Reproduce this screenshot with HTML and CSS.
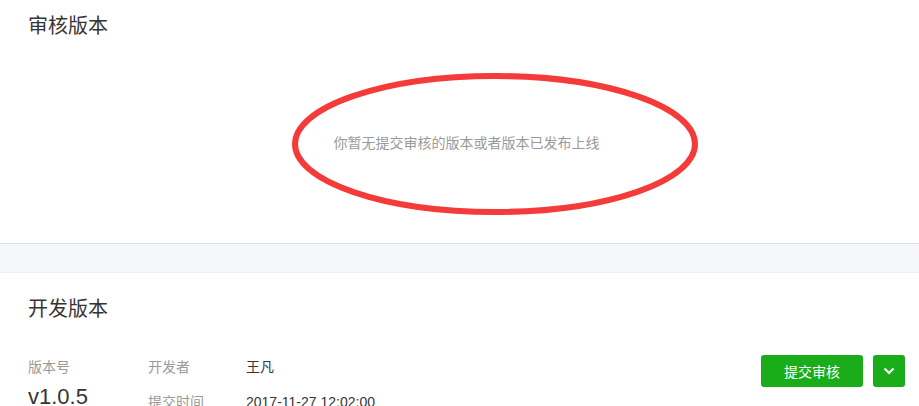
FILE: index.html
```html
<!DOCTYPE html>
<html lang="zh-CN">
<head>
    <meta charset="UTF-8">
    <meta name="viewport" content="width=device-width, initial-scale=1.0">
    <title>版本管理</title>
    <link rel="stylesheet" href="styles.css">
</head>
<body>
    <div class="section audit">
        <div class="section-title">审核版本</div>
        <div class="empty-tip">你暂无提交审核的版本或者版本已发布上线</div>
        <svg class="mark" width="406" height="142" viewBox="0 0 406 142">
            <ellipse cx="203" cy="71" rx="200" ry="68" fill="none" stroke="#f53a3a" stroke-width="6"/>
        </svg>
    </div>

    <div class="band"></div>

    <div class="section dev">
        <div class="section-title">开发版本</div>
        <div class="version-row">
            <div class="version-no">
                <div class="label">版本号</div>
                <div class="version-value">v1.0.5</div>
            </div>
            <div class="version-info">
                <div class="label">开发者</div>
                <div class="value">王凡</div>
                <div class="label">提交时间</div>
                <div class="value">2017-11-27 12:02:00</div>
            </div>
            <div class="actions">
                <button class="btn btn-primary">提交审核</button>
                <button class="btn btn-more">
                    <svg width="12" height="8" viewBox="0 0 12 8">
                        <path d="M1.5 1.5 L6 6 L10.5 1.5" fill="none" stroke="#fff" stroke-width="2.2"/>
                    </svg>
                </button>
            </div>
        </div>
    </div>
</body>
</html>
```

FILE: styles.css
```css
body {
    margin: 0;
    background: #fff;
    font-family: "Liberation Sans", "Noto Sans CJK SC", sans-serif;
    color: #353535;
    overflow: hidden;
}

.section {
    padding: 0 14px 0 28px;
}

.section-title {
    font-size: 20px;
    line-height: 28px;
    color: #353535;
}

.audit {
    position: relative;
    height: 244px;
    box-sizing: border-box;
    padding-top: 12px;
    border-bottom: 1px solid #e1e2e4;
}

.empty-tip {
    padding-top: 89px;
    font-size: 14px;
    line-height: 28px;
    color: #9a9a9a;
    text-align: center;
}

/* annotation drawn over the empty tip */
.mark {
    position: absolute;
    left: 292px;
    top: 73px;
}

.band {
    height: 28px;
    background: #f6f7f9;
    border-bottom: 1px solid #eef0f2;
}

.dev {
    padding-top: 22px;
}

.version-row {
    display: flex;
    align-items: flex-start;
    margin-top: 32px;
}

.version-no {
    width: 120px;
    padding-top: 2px;
}

.label {
    font-size: 14px;
    line-height: 20px;
    color: #9a9a9a;
}

.value {
    font-size: 14px;
    line-height: 20px;
    color: #353535;
}

.version-value {
    margin-top: 6px;
    font-size: 22px;
    line-height: 28px;
    color: #353535;
}

.version-info {
    display: grid;
    grid-template-columns: 98px auto;
    row-gap: 15px;
    padding-top: 2px;
    flex: 1;
}

.actions {
    display: flex;
    gap: 10px;
}

.btn {
    border: 0;
    border-radius: 3px;
    background: #1aad19;
    color: #fff;
    height: 32px;
    font-family: "Liberation Sans", "Noto Sans CJK SC", sans-serif;
    font-size: 14px;
    padding: 0;
    display: flex;
    align-items: center;
    justify-content: center;
}

.btn-primary {
    width: 102px;
}

.btn-more {
    width: 32px;
}
```
